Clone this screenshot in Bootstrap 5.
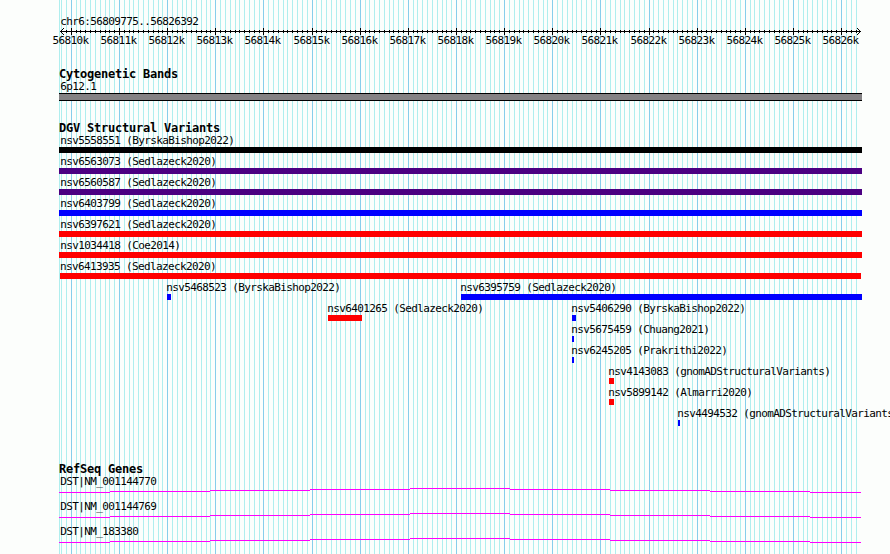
<!DOCTYPE html>
<html lang="en">

<head>
    <meta charset="UTF-8">
    <meta name="viewport" content="width=device-width, initial-scale=1.0">
    <title>chr6:56809775..56826392</title>
    <link href="https://cdn.jsdelivr.net/npm/bootstrap@5.3.0/dist/css/bootstrap.min.css" rel="stylesheet">
    <style>
        body {
            background-color: #fcfefc;
            color: #000;
            font: 11px/13px "DejaVu Sans Mono", monospace;
            letter-spacing: -0.623px;
            height: 554px;
        }

        svg {
            shape-rendering: crispEdges;
        }

        .gridlines {
            z-index: -1;
        }

        .browser {
            padding-top: 15px;
        }

        .panel-area {
            width: 803px;
            margin-left: 59px;
        }

        .track {
            margin-top: 21px;
        }

        .track-genes {
            margin-top: 35px;
        }

        .track h2 {
            font-size: 12px;
            line-height: 12px;
            font-weight: bold;
            letter-spacing: -0.225px;
            margin: 0;
        }

        .feature-label {
            padding-left: 1.3px;
        }

        .ruler {
            height: 6px;
            overflow: visible;
        }

        .scale-row {
            height: 13px;
        }

        .scale-row span,
        .feature {
            grid-area: 1 / 1;
            justify-self: start;
        }

        .band {
            height: 8px;
            background-color: #848284;
            border: solid #000;
            border-width: 1px 0;
        }

        .feature-row {
            height: 21px;
            grid-template-columns: 803px;
        }

        .feature-bar {
            height: 6px;
        }

        .feature-offset {
            margin-left: -0.7px;
        }

        .gene {
            height: 25px;
        }
    </style>
</head>

<body class="overflow-hidden position-relative">
    <svg class="gridlines position-absolute top-0 start-0" id="gridlines" width="890" height="554"></svg>

    <main class="browser text-nowrap">
        <div class="panel-area">
            <div class="feature-label">chr6:56809775..56826392</div>
            <svg class="ruler d-block" id="ruler" width="803" height="6"></svg>
            <div class="scale-row d-grid" id="scale"></div>
        </div>

        <section class="track panel-area">
            <h2>Cytogenetic Bands</h2>
            <div class="feature-label">6p12.1</div>
            <div class="band"></div>
        </section>

        <section class="track panel-area">
            <h2>DGV Structural Variants</h2>
            <div id="variants"></div>
        </section>

        <section class="track track-genes panel-area">
            <h2>RefSeq Genes</h2>
            <div id="genes"></div>
        </section>
    </main>

    <script src="https://cdn.jsdelivr.net/npm/bootstrap@5.3.0/dist/js/bootstrap.bundle.min.js"></script>
    <script>
        const LEFT = 59;
        const RIGHT = 862;
        const ORIGIN = 71.36; // x of 56810k
        const STEP = 4.814;   // pixels per 100 bp

        // [name, start x, width, colour], one array per row
        const rows = [
            [["nsv5558551 (ByrskaBishop2022)", 59, 803, "#000000"]],
            [["nsv6563073 (Sedlazeck2020)", 59, 803, "#4b0082"]],
            [["nsv6560587 (Sedlazeck2020)", 59, 803, "#4b0082"]],
            [["nsv6403799 (Sedlazeck2020)", 59, 803, "#0000ff"]],
            [["nsv6397621 (Sedlazeck2020)", 59, 803, "#ff0000"]],
            [["nsv1034418 (Coe2014)", 59, 803, "#ff0000"]],
            [["nsv6413935 (Sedlazeck2020)", 60, 801, "#ff0000"]],
            [["nsv5468523 (ByrskaBishop2022)", 167, 4, "#0000ff"], ["nsv6395759 (Sedlazeck2020)", 461, 401, "#0000ff"]],
            [["nsv6401265 (Sedlazeck2020)", 328, 34, "#ff0000"], ["nsv5406290 (ByrskaBishop2022)", 572, 4, "#0000ff"]],
            [["nsv5675459 (Chuang2021)", 572, 2, "#0000ff"]],
            [["nsv6245205 (Prakrithi2022)", 572, 2, "#0000ff"]],
            [["nsv4143083 (gnomADStructuralVariants)", 609, 5, "#ff0000"]],
            [["nsv5899142 (Almarri2020)", 609, 5, "#ff0000"]],
            [["nsv4494532 (gnomADStructuralVariants)", 678, 2, "#0000ff"]]
        ];

        const genes = ["DST|NM_001144770", "DST|NM_001144769", "DST|NM_183380"];

        function rect(x, y, w, h, fill) {
            return `<rect x="${x}" y="${y}" width="${w}" height="${h}" fill="${fill}"/>`;
        }

        // Grid lines and ruler share the same positions
        let grid = rect(LEFT, 0, 1, 554, "#afeeee");
        let ruler = rect(1, 3, 801, 1, "#000");
        let scale = "";
        for (let i = -2; i <= 163; i++) {
            const x = Math.floor(ORIGIN + i * STEP);
            const major = i % 10 === 0;
            grid += rect(x, 0, 1, 554, major ? "#87ceeb" : "#afeeee");
            ruler += major ? rect(x - LEFT, 0, 1, 7, "#000") : rect(x - LEFT, 2, 1, 3, "#000");
            if (major) {
                scale += `<span style="margin-left:${x - LEFT - 18.6}px">${56810 + i / 10}k</span>`;
            }
        }
        // Arrow heads
        for (let d = 1; d <= 3; d++) {
            for (const y of [3 - d, 3 + d]) {
                ruler += rect(1 + d, y, 1, 1, "#000") + rect(801 - d, y, 1, 1, "#000");
            }
        }
        document.getElementById("gridlines").innerHTML = grid;
        document.getElementById("ruler").innerHTML = ruler;
        document.getElementById("scale").innerHTML = scale;

        document.getElementById("variants").innerHTML = rows.map(row =>
            `<div class="feature-row d-grid">` + row.map(([name, x, width, color]) =>
                `<div class="feature" style="margin-left:${x - LEFT}px">
                    <div class="${x > 60 ? "feature-offset" : x === 60 ? "" : "feature-label"}">${name}</div>
                    <div class="feature-bar" style="width:${width}px;background-color:${color}"></div>
                </div>`).join("") + `</div>`).join("");

        // Introns are drawn as a shallow stepped arc
        const steps = [[59, 4], [110, 3], [210, 2], [310, 1], [410, 0], [510, 1], [610, 2], [710, 3], [810, 4]];
        const arc = steps.map(([x, y], i) => {
            const end = i < steps.length - 1 ? steps[i + 1][0] : RIGHT - 1;
            return rect(x - LEFT, y, end - x, 1, "#ff00ff");
        }).join("");
        document.getElementById("genes").innerHTML = genes.map(name =>
            `<div class="gene"><div class="feature-label">${name}</div><svg class="d-block" width="803" height="5">${arc}</svg></div>`).join("");
    </script>
</body>

</html>
